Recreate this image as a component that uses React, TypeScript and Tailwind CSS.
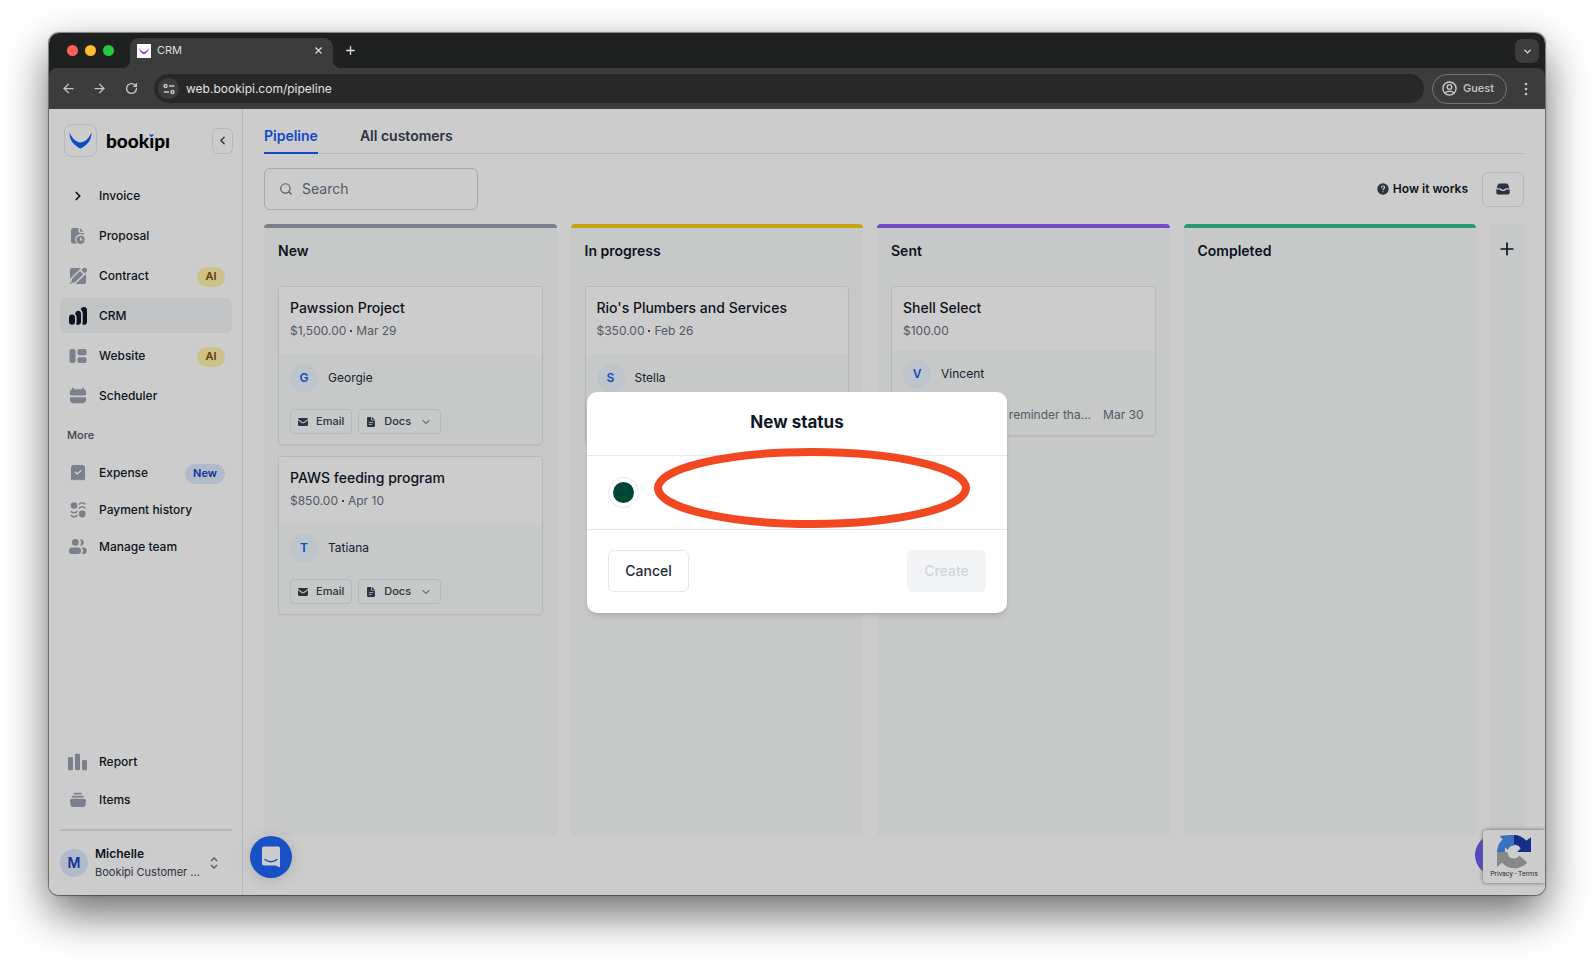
import React from 'react';
import { ArrowLeft, ArrowRight, ChevronDown, ChevronLeft, ChevronRight, Plus, RotateCw, Search, X } from 'lucide-react';

type IconProps = { children: React.ReactNode; className?: string };

const Icon: React.FC<IconProps> = ({ children, className = 'size-[18px] text-gray-400' }) => (
  <svg viewBox="0 0 18 18" fill="currentColor" aria-hidden="true" className={`shrink-0 ${className}`}>
    {children}
  </svg>
);

const BrandMark: React.FC<{ className: string }> = ({ className }) => (
  <svg viewBox="0 0 24 18" aria-hidden="true" className={className}>
    <path d="M.5.5C2.500 6 7.500 11 12 11S21.500 6 23.500.5C24.200 8.500 18.500 14.500 12 17.500 5.500 14.500-.2 8.500.5.5Z" fill="currentColor" />
  </svg>
);

const ProposalIcon = () => (
  <Icon>
    <path d="M4.200 1h5.300v3.300c0 1 .7 1.700 1.700 1.700h3.400v2.200a5 5 0 0 0-6.400 8.300H4.200A2.200 2.200 0 0 1 2 14.300V3.200C2 2 3 1 4.200 1Z" />
    <path d="M11 1.200 14.600 4.700H11.700a.7.7 0 0 1-.7-.7Z" />
    <path fillRule="evenodd" d="M11.600 8.700a4.100 4.100 0 1 1 0 8.200 4.100 4.100 0 0 1 0-8.200Zm-.7 1.700v3.100h3v-1.200h-1.700v-1.900Z" />
  </Icon>
);

const ContractIcon = () => (
  <Icon>
    <path d="M3 1h9L1 12V3a2 2 0 0 1 2-2Z" />
    <path d="M13.300 2.200a2.500 2.500 0 1 1 3.200 3.400l-1 .7-3.400-3.200Z" />
    <path d="m10.900 4 3.200 3.200-7.600 7.800L2 16.300l1.200-4.600Z" />
    <path d="M17 7v8a2 2 0 0 1-2 2H6.500Z" />
    <path d="m.8 15.200 1.800 1.900H1.500a.7.7 0 0 1-.7-.7Z" />
  </Icon>
);

const CrmIcon = () => (
  <Icon className="size-[18px] text-gray-900">
    <rect x="0" y="7.500" width="6" height="10.300" rx="3" />
    <path d="M9 3.800c1.800 0 3 1.200 3 3v8c0 1.800-1.200 3-3 3-.8 0-1.500-.2-2-.6.4-.7.6-1.400.6-2.300v-4.400c0-1.500-.5-2.700-1.500-3.500C6.400 5.100 7.500 3.800 9 3.800Z" />
    <path d="M14.900 0C16.800 0 18 1.300 18 3.100v11.600c0 1.900-1.200 3.100-3.100 3.100-.7 0-1.300-.2-1.800-.5.400-.7.600-1.500.600-2.400V6.600c0-1.800-.7-3.200-2-4C12.100 1 13.300 0 14.900 0Z" />
  </Icon>
);

const WebsiteIcon = () => (
  <Icon>
    <rect x="0.500" y="2" width="6" height="14" rx="2.300" />
    <rect x="8.500" y="2" width="9" height="6.300" rx="2" />
    <rect x="8.500" y="10.200" width="9" height="5.800" rx="2" />
  </Icon>
);

const SchedulerIcon = () => (
  <Icon>
    <path d="M4 .8c.6 0 1 .4 1 1v.4h8v-.4c0-.6.4-1 1-1s1 .4 1 1v.5c1.300.4 2.200 1.500 2.200 3v1.200c0 1.200-.8 2-2 2H2.800c-1.200 0-2-.8-2-2V5.300c0-1.500.9-2.600 2.200-3v-.5c0-.6.4-1 1-1Z" />
    <path d="M2.300 10.300h13.400c.8 0 1.500.6 1.500 1.400 0 2.800-1.500 4.600-4 4.600H4.800c-2.500 0-4-1.800-4-4.600 0-.8.7-1.400 1.500-1.400Z" />
  </Icon>
);

const ExpenseIcon = () => (
  <Icon>
    <path fillRule="evenodd" d="M4.500 1h9C14.900 1 16 2.100 16 3.500v13l-1.700-1-1.800 1-1.700-1-1.800 1-1.800-1-1.700 1-1.800-1L2 16.500v-13C2 2.100 3.100 1 4.500 1Zm7.200 4.700L8.300 9 6.500 7.300l-1 1 2.800 2.600 4.500-4.200Z" />
  </Icon>
);

const PaymentIcon = () => (
  <Icon>
    <circle cx="5" cy="4.500" r="3.300" />
    <circle cx="13.200" cy="13" r="3.400" />
    <g fill="none" stroke="currentColor" strokeWidth="1.500" strokeLinecap="round">
      <path d="M10.500 3c1-1.600 4.400-1.600 5.400 0M10.500 7c1-1.700 4.400-1.700 5.400 0M2.200 10.500c1.200 1.700 4.500 1.700 5.600 0M2.200 14.500c1.200 1.700 4.500 1.700 5.600 0" />
    </g>
  </Icon>
);

const TeamIcon = () => (
  <Icon>
    <circle cx="6.300" cy="4.400" r="3.300" />
    <path d="M11 1.200a3.300 3.300 0 1 1 0 6.500c.8-1 1.100-2 1.100-3.200S11.700 2.200 11 1.200Z" />
    <rect x="0" y="9.500" width="12" height="6.500" rx="3" />
    <path d="M12.500 9.500h2a3.200 3.200 0 0 1 0 6.400h-1.800c.8-.9 1.200-2 1.200-3.200s-.5-2.300-1.400-3.200Z" />
  </Icon>
);

const ReportIcon = () => (
  <Icon className="size-[18px] overflow-visible text-gray-400">
    <rect x="-1" y="4" width="5" height="13.200" rx="1.300" />
    <rect x="6" y="0.800" width="5" height="16.400" rx="1.300" />
    <rect x="13" y="7" width="5" height="10.200" rx="1.300" />
  </Icon>
);

const ItemsIcon = () => (
  <Icon>
    <rect x="4.800" y="1.800" width="8" height="1.800" rx=".7" />
    <rect x="2.800" y="4.700" width="12" height="1.800" rx=".7" />
    <path d="M3 7.700h12A2 2 0 0 1 17 9.700l-.5 4.300a2.200 2.200 0 0 1-2.200 2H3.700a2.200 2.200 0 0 1-2.200-2L1 9.700a2 2 0 0 1 2-2Z" />
  </Icon>
);

const MailIcon = () => (
  <svg viewBox="0 0 10 8" fill="currentColor" aria-hidden="true" className="h-2 w-[10px]">
    <path d="M1.200 0h7.600C9.500 0 10 .5 10 1.100L5.700 4a1.300 1.300 0 0 1-1.400 0L0 1.100C0 .5.5 0 1.200 0Z" />
    <path d="M0 2.200 3.800 4.900a2 2 0 0 0 2.400 0L10 2.200v4.600C10 7.500 9.500 8 8.800 8H1.200C.5 8 0 7.500 0 6.800Z" />
  </svg>
);

const DocIcon = () => (
  <svg viewBox="0 0 8 10" fill="currentColor" aria-hidden="true" className="h-[10px] w-2">
    <path fillRule="evenodd" d="M1.200 0h3v2.500c0 .6.400 1 1 1H8v5.300C8 9.500 7.500 10 6.800 10H1.200C.5 10 0 9.500 0 8.800V1.200C0 .5.5 0 1.200 0Zm.6 5v.8h4.400V5Zm0 2v.8h3V7Z" />
    <path d="M5 .1 7.900 2.800H5.500a.5.500 0 0 1-.5-.5Z" />
  </svg>
);

type NavEntry = { label: string; icon: React.ReactNode; badge?: 'AI' | 'New'; active?: boolean };

const mainNav: NavEntry[] = [
  { label: 'Invoice', icon: <ChevronRight size={18} className="shrink-0 p-[2px] text-gray-900" strokeWidth={3} /> },
  { label: 'Proposal', icon: <ProposalIcon /> },
  { label: 'Contract', icon: <ContractIcon />, badge: 'AI' },
  { label: 'CRM', icon: <CrmIcon />, active: true },
  { label: 'Website', icon: <WebsiteIcon />, badge: 'AI' },
  { label: 'Scheduler', icon: <SchedulerIcon /> }
];

const moreNav: NavEntry[] = [
  { label: 'Expense', icon: <ExpenseIcon />, badge: 'New' },
  { label: 'Payment history', icon: <PaymentIcon /> },
  { label: 'Manage team', icon: <TeamIcon /> }
];

const footerNav: NavEntry[] = [
  { label: 'Report', icon: <ReportIcon /> },
  { label: 'Items', icon: <ItemsIcon /> }
];

const NavItem: React.FC<{ item: NavEntry }> = ({ item }) => (
  <a
    href="#"
    className={`flex h-[35px] items-center gap-3 rounded-md pl-[9px] pr-[7px] text-xs font-medium text-gray-900 ${
      item.active ? 'bg-gray-100' : ''
    }`}
  >
    {item.icon}
    <span className="whitespace-nowrap">{item.label}</span>
    {item.badge === 'AI' && (
      <span className="ml-auto mt-[2px] flex h-5 w-7 items-center justify-center rounded-full bg-[#fdf3a8] text-[11px] font-semibold text-[#854d0e]">AI</span>
    )}
    {item.badge === 'New' && (
      <span className="ml-auto mt-[2px] flex h-5 w-10 items-center justify-center rounded-full bg-blue-100 text-[11px] font-semibold text-blue-800">New</span>
    )}
  </a>
);

type Deal = { title: string; amount: string; date?: string; contact: string; reminder?: { text: string; date: string } };
type Column = { name: string; accent: string; deals: Deal[] };

const columns: Column[] = [
  {
    name: 'New',
    accent: 'border-gray-400',
    deals: [
      { title: 'Pawssion Project', amount: '$1,500.00', date: 'Mar 29', contact: 'Georgie' },
      { title: 'PAWS feeding program', amount: '$850.00', date: 'Apr 10', contact: 'Tatiana' }
    ]
  },
  {
    name: 'In progress',
    accent: 'border-[#facc15]',
    deals: [{ title: "Rio's Plumbers and Services", amount: '$350.00', date: 'Feb 26', contact: 'Stella' }]
  },
  {
    name: 'Sent',
    accent: 'border-[#9061f9]',
    deals: [
      {
        title: 'Shell Select',
        amount: '$100.00',
        contact: 'Vincent',
        reminder: { text: 'Send a reminder tha...', date: 'Mar 30' }
      }
    ]
  },
  { name: 'Completed', accent: 'border-[#31c48d]', deals: [] }
];

const DealCard: React.FC<{ deal: Deal }> = ({ deal }) => (
  <article className="overflow-hidden rounded border border-gray-200 bg-gray-50 shadow-xs">
    <div className={`bg-white px-[11px] pt-[10px] ${deal.date ? 'pb-[13px]' : 'pb-[9px]'}`}>
      <h3 className="text-sm/[22px] font-medium text-gray-900">{deal.title}</h3>
      <p className="mt-[2px] flex items-center gap-1 text-xs/[20px] text-gray-500">
        <span>{deal.amount}</span>
        {deal.date && (
          <>
            <span className="size-[2px] rounded-full bg-gray-900" />
            <span>{deal.date}</span>
          </>
        )}
      </p>
    </div>
    <div className="px-[11px] py-[10px]">
      <div className="flex items-center gap-[10px] text-xs text-gray-800">
        <span className="flex size-7 items-center justify-center rounded-full bg-[#ebf5ff] font-semibold text-blue-600">{deal.contact[0]}</span>
        {deal.contact}
      </div>
      {deal.reminder ? (
        <div className="mt-[17px] flex justify-end gap-3 whitespace-nowrap text-xs/[20px] text-gray-500">
          <span>{deal.reminder.text}</span>
          <span>{deal.reminder.date}</span>
        </div>
      ) : (
        <div className="mt-[17px] flex gap-[6px] text-[11px] font-medium text-gray-700">
          <button className="flex h-[25px] items-center gap-2 rounded border border-gray-200 px-[7px]">
            <MailIcon />
            Email
          </button>
          <button className="flex h-[25px] items-center gap-[9px] rounded border border-gray-200 px-2">
            <DocIcon />
            Docs
            <ChevronDown size={12} strokeWidth={2} />
          </button>
        </div>
      )}
    </div>
  </article>
);

const BrowserChrome = () => (
  <header className="shrink-0 bg-[#1f2120] text-[#dedede]">
    <div className="flex h-[35px] items-end pl-[18px] pr-[6px]">
      <div className="mb-3 flex gap-[7px]">
        <span className="size-[11px] rounded-full bg-[#ff5f57]" />
        <span className="size-[11px] rounded-full bg-[#febc2e]" />
        <span className="size-[11px] rounded-full bg-[#28c840]" />
      </div>
      <div className="relative ml-4 flex h-[30px] w-[203px] items-center rounded-t-[9px] bg-[#3c3c3c] pb-[5px] pl-[7px] pr-[9px] text-[11px]">
        <span className="absolute -left-2 bottom-0 size-2 bg-[radial-gradient(circle_at_top_left,transparent_8px,#3c3c3c_8px)]" />
        <span className="absolute -right-2 bottom-0 size-2 bg-[radial-gradient(circle_at_top_right,transparent_8px,#3c3c3c_8px)]" />
        <span className="mr-[6px] flex size-[14px] items-center justify-center bg-white text-[#9b51c9]">
          <BrandMark className="h-2 w-[10px]" />
        </span>
        CRM
        <button aria-label="Close tab" className="ml-auto">
          <X size={11} strokeWidth={2.500} />
        </button>
      </div>
      <button aria-label="New tab" className="mb-[11px] ml-[11px]">
        <Plus size={13} strokeWidth={2.500} />
      </button>
      <button aria-label="Search tabs" className="mb-[5px] ml-auto flex size-6 items-center justify-center rounded-[7px] bg-[#3c3c3c]">
        <ChevronDown size={11} strokeWidth={3} />
      </button>
    </div>
    <div className="flex h-[41px] items-center rounded-t-lg bg-[#3c3c3c] pl-3 pr-[17px] text-[#c7c7c7]">
      <button aria-label="Back">
        <ArrowLeft size={15} strokeWidth={2} />
      </button>
      <button aria-label="Forward" className="ml-4">
        <ArrowRight size={15} strokeWidth={2} />
      </button>
      <button aria-label="Reload" className="ml-[18px]">
        <RotateCw size={13} strokeWidth={2.500} />
      </button>
      <div className="ml-4 flex h-[29px] flex-1 items-center rounded-full bg-[#282828] pl-1">
        <span className="flex size-[21px] shrink-0 items-center justify-center rounded-full bg-[#3c3c3c]">
          <svg viewBox="0 0 12 12" fill="none" stroke="currentColor" strokeWidth="1.400" aria-hidden="true" className="size-3">
            <circle cx="2.500" cy="3" r="1.500" />
            <circle cx="9.500" cy="9" r="1.500" />
            <path d="M6 3h5.300M.8 9H6" />
          </svg>
        </span>
        <input aria-label="Address" defaultValue="web.bookipi.com/pipeline" className="ml-[7px] min-w-0 flex-1 bg-transparent text-xs text-[#e3e3e3] outline-none" />
      </div>
      <button className="ml-2 flex h-[30px] w-[75px] items-center gap-[6px] rounded-full border border-[#777] pl-[9px] text-[11px] font-medium">
        <svg viewBox="0 0 16 16" fill="none" stroke="currentColor" strokeWidth="1.500" aria-hidden="true" className="size-[15px]">
          <circle cx="8" cy="8" r="7" />
          <circle cx="8" cy="6.300" r="2.400" />
          <path d="M3.200 12.800c2.400-2.400 7.200-2.400 9.600 0" />
        </svg>
        Guest
      </button>
      <button aria-label="Browser menu" className="ml-[17px]">
        <svg viewBox="0 0 4 14" fill="currentColor" aria-hidden="true" className="h-[14px] w-1">
          <circle cx="2" cy="2" r="1.300" />
          <circle cx="2" cy="7" r="1.300" />
          <circle cx="2" cy="12" r="1.300" />
        </svg>
      </button>
    </div>
  </header>
);

const Sidebar = () => (
  <aside className="flex w-[194px] shrink-0 flex-col border-r border-gray-200 pb-[14px] pl-[11px] pr-[10px] pt-[15px]">
    <div className="mb-[21px] flex h-[33px] items-center pl-1">
      <span className="flex size-[33px] items-center justify-center rounded-lg border border-gray-200 text-[#0e5ff8]">
        <BrandMark className="h-[17px] w-[23px]" />
      </span>
      <span className="relative ml-[9px] font-['Lato'] text-[19px]/[24px] font-black text-black">
        book
        <span className="relative">
          ı
          <svg viewBox="0 0 6 4" aria-hidden="true" className="absolute left-0 top-[5px] h-[3px] w-[5px] text-[#0e5ff8]">
            <path d="M0 0c2 1.200 4 1.200 6 0-.3 2-1.300 3.300-3 4C1.300 3.300.3 2 0 0Z" fill="currentColor" />
          </svg>
        </span>
        pı
      </span>
      <button aria-label="Collapse sidebar" className="-mr-px ml-auto flex h-[26px] w-[21px] items-center justify-center rounded-md border border-gray-200 text-gray-700">
        <ChevronLeft size={13} strokeWidth={2.500} />
      </button>
    </div>

    <nav className="flex flex-col gap-[5px]">
      {mainNav.map((item) => (
        <NavItem key={item.label} item={item} />
      ))}
    </nav>
    <p className="mb-3 mt-[14px] pl-[7px] text-[11px]/[16px] font-medium text-gray-600">More</p>
    <nav className="flex flex-col gap-[2px]">
      {moreNav.map((item) => (
        <NavItem key={item.label} item={item} />
      ))}
    </nav>
    <nav className="mt-auto flex flex-col gap-[3px]">
      {footerNav.map((item) => (
        <NavItem key={item.label} item={item} />
      ))}
    </nav>

    <button className="mt-3 flex items-center border-t-2 border-gray-200 pt-[14px] text-left">
      <span className="flex size-7 shrink-0 items-center justify-center rounded-full bg-blue-100 text-sm font-semibold text-blue-800">M</span>
      <span className="ml-[7px] min-w-0">
        <span className="block text-xs/[18px] font-semibold text-gray-900">Michelle</span>
        <span className="block whitespace-nowrap text-[11px]/[18px] text-gray-700">Bookipi Customer ...</span>
      </span>
      <svg viewBox="0 0 8 12" fill="none" stroke="currentColor" strokeWidth="1.400" aria-hidden="true" className="ml-auto mr-[14px] h-3 w-2 text-gray-500">
        <path d="m1 4 3-3 3 3M1 8l3 3 3-3" />
      </svg>
    </button>
  </aside>
);

const Board = () => (
  <main className="flex min-w-0 flex-1 flex-col px-[21px] pb-[60px]">
    <nav className="flex h-[45px] items-stretch gap-[42px] border-b border-gray-200 text-sm font-semibold">
      <a href="#" className="-mb-px flex items-center border-b-2 border-blue-600 pt-[10px] text-blue-600">Pipeline</a>
      <a href="#" className="-mb-px flex items-center border-b-2 border-transparent pt-[10px] text-gray-700">All customers</a>
    </nav>

    <div className="my-[14px] flex items-center">
      <label className="flex h-[42px] w-[214px] items-center gap-[9px] rounded-md border border-gray-300 px-[14px] text-gray-500">
        <Search size={14} strokeWidth={2} className="shrink-0" />
        <input type="search" aria-label="Search" placeholder="Search" className="w-full bg-transparent text-sm outline-none placeholder:text-gray-500" />
      </label>
      <a href="#" className="ml-auto flex items-center gap-1 text-xs font-semibold text-gray-900">
        <svg viewBox="0 0 12 12" aria-hidden="true" className="size-3 text-gray-700">
          <circle cx="6" cy="6" r="5.700" fill="currentColor" />
          <path d="M4.400 4.600C4.500 3.500 5.200 3 6 3s1.600.5 1.600 1.400C7.600 5.500 6 5.500 6 6.900M6 8.200v1" fill="none" stroke="#fff" strokeWidth="1.200" />
        </svg>
        How it works
      </a>
      <button aria-label="Inbox" className="ml-[14px] flex h-[35px] w-[42px] items-center justify-center rounded-md border border-gray-200 text-gray-700">
        <svg viewBox="0 0 14 12" fill="currentColor" aria-hidden="true" className="h-3 w-[14px]">
          <path d="M4 .5h6c1.200 0 2 .6 2.400 1.700l1 3H10c-.6 0-.9.300-1.300.7-.9 1-2.500 1-3.400 0-.4-.4-.7-.7-1.300-.7H.6l1-3C2 1.100 2.800.5 4 .5Z" />
          <path d="M.3 6.400h3.500c1.600 2.200 4.800 2.200 6.400 0h3.500v3c0 1.300-.8 2.100-2.100 2.100H2.400C1.100 11.500.3 10.700.3 9.400Z" />
        </svg>
      </button>
    </div>

    <div className="flex flex-1 gap-[14px]">
      {columns.map((column) => (
        <section key={column.name} className={`min-w-0 flex-1 rounded-t border-t-4 bg-gray-50 px-[14px] ${column.accent}`}>
          <h2 className="mb-3 flex h-[46px] items-center text-sm font-semibold text-gray-900">{column.name}</h2>
          <div className="flex flex-col gap-[11px]">
            {column.deals.map((deal) => (
              <DealCard key={deal.title} deal={deal} />
            ))}
          </div>
        </section>
      ))}
      <button aria-label="Add status" className="flex w-[34px] justify-center bg-gray-50 pt-[15px] text-gray-900">
        <Plus size={20} strokeWidth={2} />
      </button>
    </div>
  </main>
);

// Chat launcher, help bubble and captcha badge float above the board
const FloatingWidgets = () => (
  <>
    <button aria-label="Open chat" className="absolute bottom-[17px] left-[201px] flex size-[42px] items-center justify-center rounded-full bg-[#1f66f7] shadow-[0_2px_14px_rgba(0,0,0,0.15)]">
      <svg viewBox="0 0 20 22" aria-hidden="true" className="h-[22px] w-5">
        <path d="M3 .5h14c1.200 0 2 .8 2 2v19l-4.500-2H3c-1.200 0-2-.8-2-2v-15c0-1.200.8-2 2-2Z" fill="#fff" />
        <path d="M4 13.500c3.500 2.900 8.500 2.900 12 0" fill="none" stroke="#1f66f7" strokeWidth="1.400" strokeLinecap="round" />
      </svg>
    </button>
    <button aria-label="Help" className="absolute bottom-[19px] right-7 size-[42px] rounded-full bg-[#6a5af0]" />
    <div className="absolute bottom-3 right-0 flex h-[53px] w-[62px] flex-col items-center rounded-l-sm bg-white pt-[5px] shadow-[0_0_4px_#808080]">
      <svg viewBox="0 0 33 33" aria-hidden="true" className="size-[34px]">
        <path d="M16.500 0v10.200c-3 .3-5.300 1.700-6 4.300L8.200 12 7.600 16.500H0C0 11.800 2 7.300 5.400 4.300L2.600 1.200C7 .1 11.600 0 16.500 0Z" fill="#4a8cf0" />
        <path d="M16.500 0c4.700 0 8.900 2 11.800 5.500L33 2.200v14.300H19.500l3.400-3.300c-1-2.200-3.200-3.800-6.400-3.800Z" fill="#1c3aa9" />
        <path d="M0 16.500h10.200c.2 3.600 2.600 6.300 6 6.300 2.400 0 4.300-1 5.500-2.800l7.600 6.800A16.500 16.500 0 0 1 4.800 27L0 31Z" fill="#ababab" />
      </svg>
      <p className="mt-px whitespace-nowrap font-['Roboto'] text-[7px]/[9px] text-gray-700">
        <a href="#">Privacy</a> - <a href="#">Terms</a>
      </p>
    </div>
  </>
);

const NewStatusDialog = () => (
  <div className="absolute inset-0 flex items-center justify-center bg-black/20">
    <form role="dialog" aria-labelledby="dialog-title" className="relative w-[420px] rounded-[10px] bg-white shadow-md">
      <h2 id="dialog-title" className="border-b border-gray-200 pb-5 pt-[18px] text-center text-[17px]/[25px] font-bold text-gray-900">New status</h2>
      <div className="flex h-[74px] items-center gap-4 border-b border-gray-200 px-[21px]">
        <button type="button" aria-label="Status colour" className="flex size-[31px] items-center justify-center rounded-full border border-gray-200">
          <span className="size-[21px] rounded-full bg-[#014737]" />
        </button>
        <input type="text" aria-label="Status name" className="h-10 flex-1 text-sm outline-none" />
      </div>
      <div className="flex justify-between px-[21px] pb-[21px] pt-5 text-sm font-medium">
        <button type="button" className="h-[42px] w-[81px] rounded-md border border-gray-200 text-gray-800">Cancel</button>
        <button type="submit" disabled className="h-[42px] w-[79px] rounded-md bg-gray-100 text-gray-300">Create</button>
      </div>
      <svg viewBox="0 0 316 80" aria-hidden="true" className="pointer-events-none absolute left-[67px] top-14 h-20 w-[316px]">
        <ellipse cx="158" cy="40" rx="154" ry="36" fill="none" stroke="#f24822" strokeWidth="8" />
      </svg>
    </form>
  </div>
);

const App: React.FC = () => (
  <div className="flex h-screen flex-col bg-white pb-[65px] pl-[49px] pr-[50px] pt-[33px] font-['Inter',sans-serif]">
    <div className="flex min-h-0 flex-1 flex-col overflow-hidden rounded-[10px] shadow-[0_18px_45px_rgba(0,0,0,0.6),0_0_1px_1px_rgba(0,0,0,0.45)]">
      <BrowserChrome />
      <div className="relative flex min-h-0 flex-1 bg-white">
        <Sidebar />
        <Board />
        <FloatingWidgets />
        <NewStatusDialog />
      </div>
    </div>
  </div>
);

export default App;
